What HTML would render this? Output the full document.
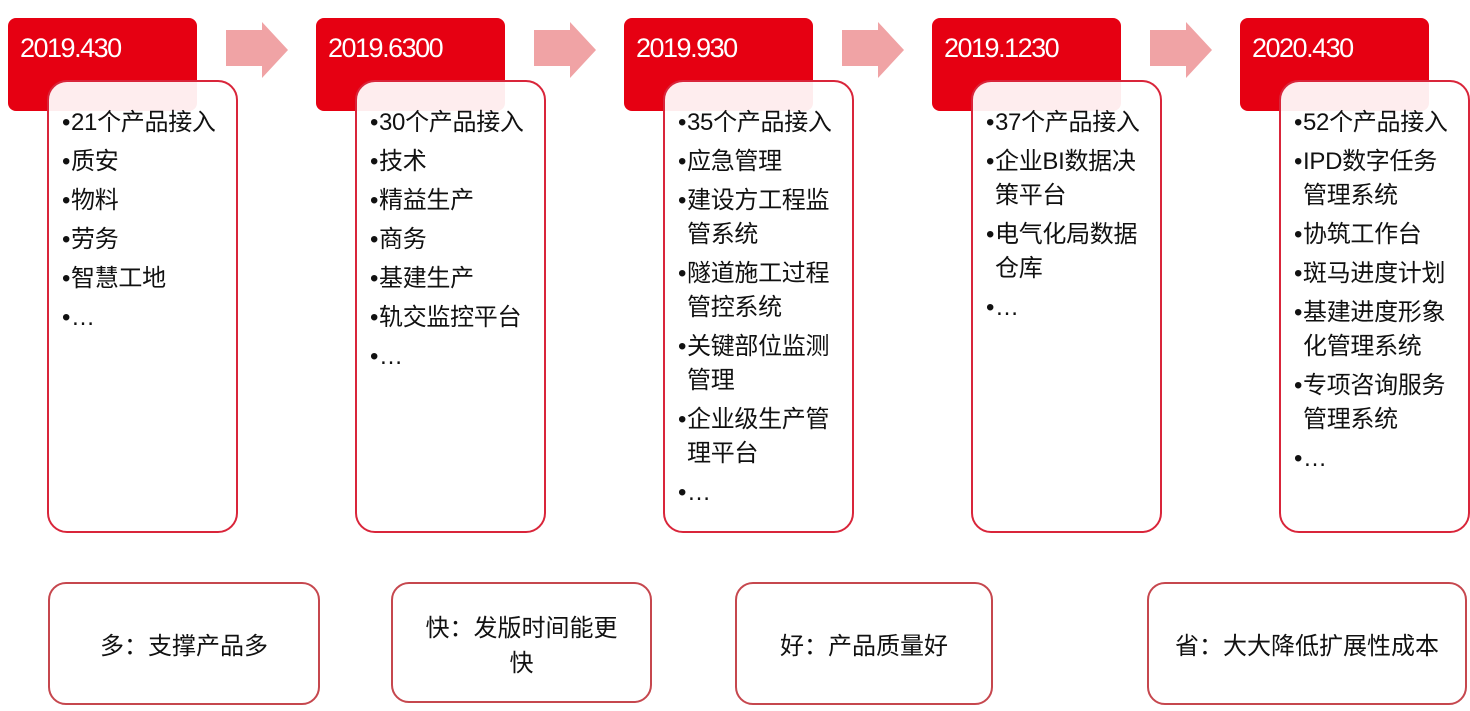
<!DOCTYPE html>
<html><head><meta charset="utf-8">
<style>
*{margin:0;padding:0;box-sizing:border-box}
body{width:1470px;height:711px;background:#fff;position:relative;overflow:hidden;font-family:"Liberation Sans","Noto Sans CJK SC",sans-serif;color:#111}
.red{position:absolute;top:18px;width:189px;height:93px;background:#e60012;border-radius:8px;color:#fff;font-size:27px;padding:15px 0 0 12px;letter-spacing:-1.5px;font-family:"Liberation Sans",sans-serif}
.card{position:absolute;top:80px;width:191px;height:453px;background:rgba(255,255,255,0.93);border:2px solid #d9253a;border-radius:20px;padding:24px 0 0 13px;font-size:24px}
.it{line-height:34px;margin-bottom:5px;padding-left:9px;text-indent:-9px;white-space:nowrap;font-family:"Liberation Sans","Noto Sans CJK SC",sans-serif;letter-spacing:-0.3px}
.b{font-family:"Liberation Sans",sans-serif;display:inline-block;width:9px;text-indent:0;letter-spacing:0}
.arrow{position:absolute;top:22px;width:62px;height:56px}
.bot{position:absolute;top:582px;height:123px;border:2px solid #c6474e;border-radius:18px;display:flex;align-items:center;justify-content:center;text-align:center;font-size:24px;line-height:35px;font-family:"Noto Sans CJK SC",sans-serif;color:#111}
</style></head><body>
<div class="red" style="left:8px">2019.430</div>
<div class="red" style="left:316px">2019.6300</div>
<div class="red" style="left:624px">2019.930</div>
<div class="red" style="left:932px">2019.1230</div>
<div class="red" style="left:1240px">2020.430</div>

<svg class="arrow" style="left:226px" viewBox="0 0 62 56"><polygon points="0,8 36,8 36,0 62,28 36,56 36,44 0,44" fill="#f0a3a5"/></svg>
<svg class="arrow" style="left:534px" viewBox="0 0 62 56"><polygon points="0,8 36,8 36,0 62,28 36,56 36,44 0,44" fill="#f0a3a5"/></svg>
<svg class="arrow" style="left:842px" viewBox="0 0 62 56"><polygon points="0,8 36,8 36,0 62,28 36,56 36,44 0,44" fill="#f0a3a5"/></svg>
<svg class="arrow" style="left:1150px" viewBox="0 0 62 56"><polygon points="0,8 36,8 36,0 62,28 36,56 36,44 0,44" fill="#f0a3a5"/></svg>

<div class="card" style="left:47px">
<div class="it"><span class="b">•</span>21个产品接入</div><div class="it"><span class="b">•</span>质安</div><div class="it"><span class="b">•</span>物料</div><div class="it"><span class="b">•</span>劳务</div><div class="it"><span class="b">•</span>智慧工地</div><div class="it"><span class="b">•</span>…</div>
</div>
<div class="card" style="left:355px">
<div class="it"><span class="b">•</span>30个产品接入</div><div class="it"><span class="b">•</span>技术</div><div class="it"><span class="b">•</span>精益生产</div><div class="it"><span class="b">•</span>商务</div><div class="it"><span class="b">•</span>基建生产</div><div class="it"><span class="b">•</span>轨交监控平台</div><div class="it"><span class="b">•</span>…</div>
</div>
<div class="card" style="left:663px">
<div class="it"><span class="b">•</span>35个产品接入</div><div class="it"><span class="b">•</span>应急管理</div><div class="it"><span class="b">•</span>建设方工程监<br>管系统</div><div class="it"><span class="b">•</span>隧道施工过程<br>管控系统</div><div class="it"><span class="b">•</span>关键部位监测<br>管理</div><div class="it"><span class="b">•</span>企业级生产管<br>理平台</div><div class="it"><span class="b">•</span>…</div>
</div>
<div class="card" style="left:971px">
<div class="it"><span class="b">•</span>37个产品接入</div><div class="it"><span class="b">•</span>企业BI数据决<br>策平台</div><div class="it"><span class="b">•</span>电气化局数据<br>仓库</div><div class="it"><span class="b">•</span>…</div>
</div>
<div class="card" style="left:1279px">
<div class="it"><span class="b">•</span>52个产品接入</div><div class="it"><span class="b">•</span>IPD数字任务<br>管理系统</div><div class="it"><span class="b">•</span>协筑工作台</div><div class="it"><span class="b">•</span>斑马进度计划</div><div class="it"><span class="b">•</span>基建进度形象<br>化管理系统</div><div class="it"><span class="b">•</span>专项咨询服务<br>管理系统</div><div class="it"><span class="b">•</span>…</div>
</div>

<div class="bot" style="left:48px;width:272px">多：支撑产品多</div>
<div class="bot" style="left:391px;width:261px;height:121px">快：发版时间能更<br>快</div>
<div class="bot" style="left:735px;width:258px">好：产品质量好</div>
<div class="bot" style="left:1147px;width:320px">省：大大降低扩展性成本</div>
</body></html>
